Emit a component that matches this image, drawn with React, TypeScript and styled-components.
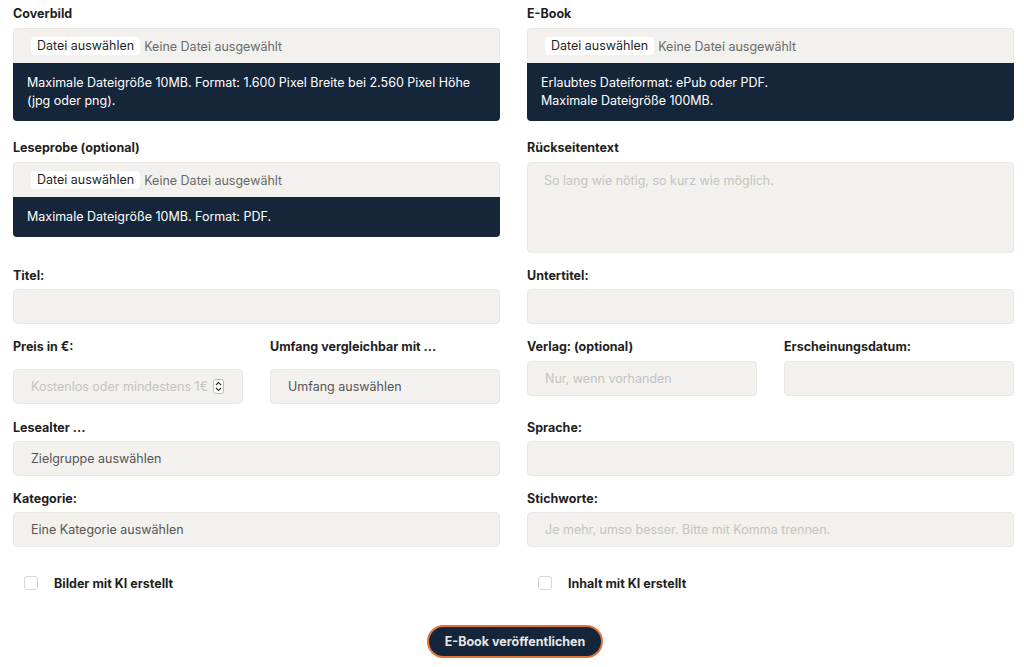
import React from 'react';
import styled, { createGlobalStyle } from 'styled-components';

const GlobalStyle = createGlobalStyle`
  html, body {
    margin: 0;
    padding: 0;
    background: #ffffff;
  }
  body {
    font-family: Inter, "Noto Sans", "Liberation Sans", sans-serif;
    font-size: 12.5px;
    color: #222;
  }
  * { box-sizing: border-box; }
`;

const Page = styled.form`
  width: 1024px;
  padding: 6px 10px 8px 13px;
  display: flex;
  flex-direction: column;
`;

const Row = styled.div<{ gapAfter?: number }>`
  display: grid;
  grid-template-columns: 1fr 1fr;
  column-gap: 27px;
  margin-bottom: ${p => p.gapAfter ?? 15}px;
`;

const Pair = styled.div`
  display: grid;
  grid-template-columns: 1fr 1fr;
  column-gap: 27px;
`;

const Field = styled.div`
  display: flex;
  flex-direction: column;
`;

const Label = styled.label<{ space?: number }>`
  font-weight: 700;
  font-size: 12.5px;
  line-height: 16px;
  color: #1f1f1f;
  margin-bottom: ${p => p.space ?? 5}px;
`;

const FileBox = styled.div`
  height: 35px;
  background: #f2f1ee;
  border: 1px solid #e9e8e4;
  border-bottom: none;
  border-radius: 4px 4px 0 0;
  display: flex;
  align-items: center;
  padding-left: 17px;
  gap: 4px;
`;

const FileButton = styled.span`
  background: #ffffff;
  border-radius: 4px;
  padding: 1px 6px;
  line-height: 16px;
  color: #1f1f1f;
`;

const FileState = styled.span`
  color: #6a6a6a;
`;

const Info = styled.div`
  background: #16263a;
  color: #ffffff;
  font-size: 12.5px;
  line-height: 18px;
  padding: 11px 14px;
  border-radius: 0 0 4px 4px;
`;

const Input = styled.div<{ muted?: boolean }>`
  height: 35px;
  background: #f2f1ee;
  border: 1px solid #e9e8e4;
  border-radius: 4px;
  display: flex;
  align-items: center;
  justify-content: space-between;
  padding: 0 18px 0 17px;
  color: ${p => (p.muted ? '#c4c4c1' : '#555')};
`;

const TextArea = styled.div`
  height: 91px;
  background: #f2f1ee;
  border: 1px solid #e9e8e4;
  border-radius: 4px;
  padding: 10px 16px;
  color: #c4c4c1;
`;

const Spin = styled.span`
  width: 11px;
  height: 15px;
  background: #fff;
  border: 1px solid #bdbdbd;
  border-radius: 3px;
  display: flex;
  align-items: center;
  justify-content: center;
`;

const CheckRow = styled.div`
  display: flex;
  align-items: center;
  padding-left: 11px;
  height: 20px;
`;

const Box = styled.span`
  width: 14px;
  height: 14px;
  border: 1px solid #d6d6d6;
  border-radius: 3px;
  background: #fff;
  margin-right: 16px;
`;

const CheckLabel = styled.span`
  font-weight: 700;
  color: #1f1f1f;
`;

const Submit = styled.button`
  align-self: center;
  margin-top: 32px;
  margin-left: 3px;
  height: 33px;
  padding: 0 16px;
  border-radius: 17px;
  border: 2px solid #e0743e;
  background: #15263a;
  color: #e6e6e6;
  font-family: inherit;
  font-weight: 700;
  font-size: 12.5px;
`;

const FileField: React.FC<{ label: string; children: React.ReactNode }> = ({ label, children }) => (
  <Field>
    <Label space={6}>{label}</Label>
    <FileBox>
      <FileButton>Datei auswählen</FileButton>
      <FileState>Keine Datei ausgewählt</FileState>
    </FileBox>
    <Info>{children}</Info>
  </Field>
);

const TextField: React.FC<{ label: string; value?: string; muted?: boolean; space?: number; spin?: boolean }> = ({
  label,
  value,
  muted,
  space,
  spin,
}) => (
  <Field>
    <Label space={space}>{label}</Label>
    <Input muted={muted}>
      <span>{value}</span>
      {spin && (
        <Spin>
          <svg width="7" height="11" viewBox="0 0 7 11">
            <path d="M1 4 L3.5 1.5 L6 4 M1 7 L3.5 9.5 L6 7" fill="none" stroke="#333" strokeWidth="1.1" />
          </svg>
        </Spin>
      )}
    </Input>
  </Field>
);

export default function App() {
  return (
    <>
      <GlobalStyle />
      <Page>
        <Row gapAfter={19}>
          <FileField label="Coverbild">
            Maximale Dateigröße 10MB. Format: 1.600 Pixel Breite bei 2.560 Pixel Höhe (jpg oder png).
          </FileField>
          <FileField label="E-Book">
            Erlaubtes Dateiformat: ePub oder PDF.
            <br />
            Maximale Dateigröße 100MB.
          </FileField>
        </Row>
        <Row>
          <div>
            <FileField label="Leseprobe (optional)">Maximale Dateigröße 10MB. Format: PDF.</FileField>
          </div>
          <Field>
            <Label space={6}>Rückseitentext</Label>
            <TextArea>So lang wie nötig, so kurz wie möglich.</TextArea>
          </Field>
        </Row>
        <Row>
          <TextField label="Titel:" />
          <TextField label="Untertitel:" />
        </Row>
        <Row gapAfter={16}>
          <Pair>
            <TextField label="Preis in €:" value="Kostenlos oder mindestens 1€" muted space={14} spin />
            <TextField label="Umfang vergleichbar mit ..." value="Umfang auswählen" space={14} />
          </Pair>
          <Pair>
            <TextField label="Verlag: (optional)" value="Nur, wenn vorhanden" muted space={6} />
            <TextField label="Erscheinungsdatum:" space={6} />
          </Pair>
        </Row>
        <Row>
          <TextField label="Lesealter ..." value="Zielgruppe auswählen" />
          <TextField label="Sprache:" />
        </Row>
        <Row gapAfter={26}>
          <TextField label="Kategorie:" value="Eine Kategorie auswählen" />
          <TextField label="Stichworte:" value="Je mehr, umso besser. Bitte mit Komma trennen." muted />
        </Row>
        <Row gapAfter={0}>
          <CheckRow>
            <Box />
            <CheckLabel>Bilder mit KI erstellt</CheckLabel>
          </CheckRow>
          <CheckRow>
            <Box />
            <CheckLabel>Inhalt mit KI erstellt</CheckLabel>
          </CheckRow>
        </Row>
        <Submit type="button">E-Book veröffentlichen</Submit>
      </Page>
    </>
  );
}
